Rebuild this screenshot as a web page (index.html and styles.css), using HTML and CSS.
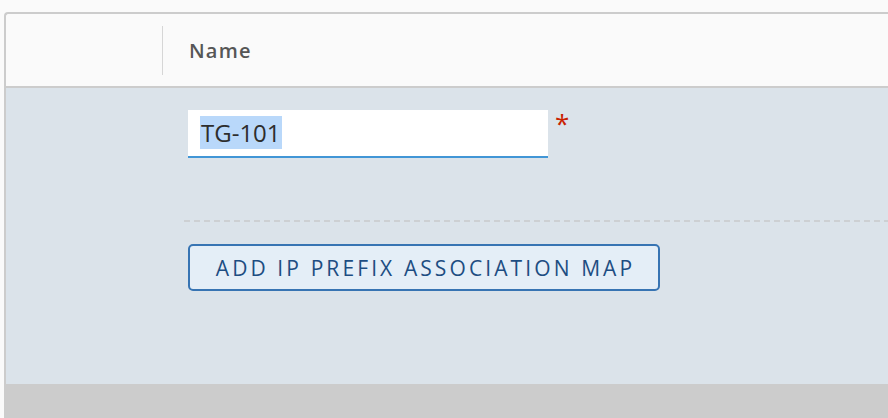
FILE: index.html
```html
<!DOCTYPE html>
<html>
<head>
<meta charset="utf-8">
<link rel="stylesheet" href="styles.css">
</head>
<body>
<div class="card">
  <div class="head">
    <div class="head-gutter"></div>
    <div class="head-cell">Name</div>
  </div>
  <div class="body">
    <div class="field-row">
      <div class="input"><span class="sel">TG-101</span></div>
      <span class="req">*</span>
    </div>
    <div class="dash"></div>
    <button class="btn">ADD IP PREFIX ASSOCIATION MAP</button>
  </div>
  <div class="foot"></div>
</div>
</body>
</html>
```
FILE: styles.css
```css
html, body {
  margin: 0;
  padding: 0;
  background: #fafafa;
  height: 100%;
  overflow: hidden;
  font-family: "Open Sans", "Noto Sans", sans-serif;
}

.card {
  margin: 12px 0 0 4px;
  border-left: 2px solid #cccccc;
  border-top: 2px solid #cccccc;
  border-top-left-radius: 4px;
  background: #fafafa;
}

.head {
  height: 72px;
  display: flex;
  align-items: center;
  border-bottom: 2px solid #cccccc;
}

.head-gutter {
  width: 156px;
  height: 49px;
  border-right: 1px solid #d6d6d6;
}

.head-cell {
  padding-left: 26px;
  font-size: 20px;
  font-weight: 600;
  letter-spacing: 1.2px;
  color: #565656;
}

.body {
  background: #dbe3ea;
  height: 296px;
  box-sizing: border-box;
  padding: 22px 0 0 182px;
}

.field-row {
  display: flex;
  align-items: flex-start;
  gap: 7px;
}

.input {
  width: 348px;
  height: 46px;
  padding-left: 12px;
  background: #ffffff;
  border-bottom: 2px solid #4196d6;
}

.sel {
  display: inline-block;
  margin-top: 6px;
  height: 33px;
  line-height: 33px;
  padding: 0 1px;
  background: #b9d8fa;
  color: #2d2d2d;
  font-size: 24px;
}

.req {
  color: #c92100;
  font-size: 26px;
  line-height: 26px;
  margin-top: 0;
}

.dash {
  margin: 62px 0 0 -4px;
  height: 2px;
  background: repeating-linear-gradient(to right, #cdd0d3 0 6px, transparent 6px 10px);
}

.btn {
  display: block;
  margin-top: 22px;
  width: 472px;
  height: 47px;
  box-sizing: border-box;
  border: 2px solid #3774b3;
  border-radius: 5px;
  background: #e4eef7;
  color: #1d4d82;
  font-family: "Open Sans", "Noto Sans", sans-serif;
  font-size: 21px;
  font-weight: 500;
  letter-spacing: 3.1px;
  text-align: center;
  padding: 0 0 0 3px;
}

.foot {
  height: 40px;
  background: #cccccc;
}
```
